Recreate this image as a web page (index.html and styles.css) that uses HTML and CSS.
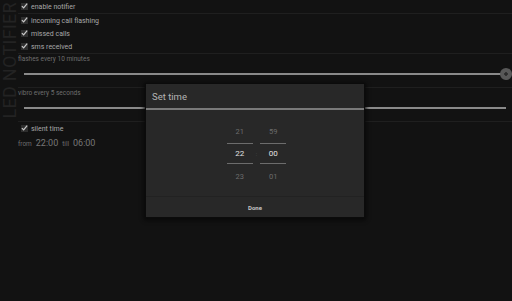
FILE: index.html
```html
<!DOCTYPE html>
<html>

<head>
    <meta charset="utf-8" />
    <title>LED Notifier</title>
    <link rel="stylesheet" href="styles.css">
</head>

<body>
    <div id="app">
        <div class="side">
            <span class="side-title">LED NOTIFIER</span>
        </div>
        <div class="prefs">
            <div class="row check-row">
                <span class="box"><svg viewBox="0 0 8 8"><path d="M1 4.2 L3 6.2 L7 1.2" /></svg></span>
                <span class="label">enable notifier</span>
            </div>
            <div class="group">
                <div class="row check-row">
                    <span class="box"><svg viewBox="0 0 8 8"><path d="M1 4.2 L3 6.2 L7 1.2" /></svg></span>
                    <span class="label">incoming call flashing</span>
                </div>
                <div class="row check-row">
                    <span class="box"><svg viewBox="0 0 8 8"><path d="M1 4.2 L3 6.2 L7 1.2" /></svg></span>
                    <span class="label">missed calls</span>
                </div>
                <div class="row check-row">
                    <span class="box"><svg viewBox="0 0 8 8"><path d="M1 4.2 L3 6.2 L7 1.2" /></svg></span>
                    <span class="label">sms received</span>
                </div>
            </div>
            <div class="slider-row">
                <span class="hint">flashes every 10 minutes</span>
                <div class="track">
                    <div class="line"></div>
                    <div class="thumb"></div>
                </div>
            </div>
            <div class="slider-row">
                <span class="hint">vibro every 5 seconds</span>
                <div class="track">
                    <div class="line"></div>
                </div>
            </div>
            <div class="silent">
                <div class="row check-row">
                    <span class="box"><svg viewBox="0 0 8 8"><path d="M1 4.2 L3 6.2 L7 1.2" /></svg></span>
                    <span class="label">silent time</span>
                </div>
                <div class="range">
                    <span class="small">from</span> <span class="big">22:00</span>
                    <span class="small">till</span> <span class="big">06:00</span>
                </div>
            </div>
        </div>

        <div class="dialog">
            <div class="dialog-title">Set time</div>
            <div class="picker">
                <div class="col">
                    <span class="num">21</span>
                    <span class="num current">22</span>
                    <span class="num">23</span>
                </div>
                <span class="colon">:</span>
                <div class="col">
                    <span class="num">59</span>
                    <span class="num current">00</span>
                    <span class="num">01</span>
                </div>
            </div>
            <div class="dialog-footer">Done</div>
        </div>
    </div>
</body>

</html>
```

FILE: styles.css
```css
body {
    padding: 0;
    margin: 0;
    background-color: #121212;
    font-family: Roboto, "Liberation Sans", sans-serif;
}

#app {
    position: relative;
    height: 301px;
    width: 512px;
    display: flex;
    overflow: hidden;
}

.side {
    width: 18px;
    display: flex;
    justify-content: center;
    align-items: flex-start;
    padding-top: 2px;
}

.side-title {
    writing-mode: vertical-rl;
    transform: rotate(180deg);
    white-space: nowrap;
    font-size: 18px;
    letter-spacing: 0.3px;
    color: #232323;
    line-height: 17px;
}

.prefs {
    flex: 1;
    display: flex;
    flex-direction: column;
}

.row {
    height: 13px;
    display: flex;
    align-items: center;
}

.check-row {
    padding-left: 3px;
    gap: 3px;
}

.group {
    border-top: 1px solid #1f1f1f;
    border-bottom: 1px solid #1f1f1f;
}

.box {
    width: 7px;
    height: 7px;
    background-color: #2e2e2e;
    display: flex;
}

.box svg {
    width: 8px;
    height: 8px;
    margin-top: -1px;
    fill: none;
    stroke: #c8c8c8;
    stroke-width: 1.4;
}

.label {
    font-size: 7px;
    color: #a8a8a8;
}

.slider-row {
    height: 33px;
    border-bottom: 1px solid #1f1f1f;
    display: flex;
    flex-direction: column;
}

.hint {
    font-size: 6.5px;
    color: #6e6e6e;
    margin-top: 1px;
}

.track {
    position: relative;
    margin: 8px 6px 0 6px;
    height: 6px;
    display: flex;
    align-items: center;
}

.line {
    flex: 1;
    height: 2px;
    background-color: #8a8a8a;
}

.thumb {
    position: absolute;
    right: -6px;
    top: -3px;
    width: 12px;
    height: 12px;
    border-radius: 50%;
    background: radial-gradient(circle, #2c2c2c 0 1.5px, #585858 2px);
}

.range {
    line-height: 11px;
    color: #6e6e6e;
}

.small {
    font-size: 6.5px;
}

.big {
    font-size: 9px;
    color: #777;
}

.dialog {
    position: absolute;
    left: 146px;
    top: 84px;
    width: 218px;
    height: 133px;
    background-color: #282828;
    box-shadow: 0 0 0 1px #0b0b0b, 0 1px 4px 2px #080808;
    display: flex;
    flex-direction: column;
}

.dialog-title {
    height: 24px;
    border-bottom: 2px solid #7a7a7a;
    font-size: 9.5px;
    color: #b4b4b4;
    padding-left: 6px;
    display: flex;
    align-items: center;
}

.picker {
    flex: 1;
    display: flex;
    justify-content: center;
    align-items: center;
    gap: 3px;
    padding-left: 3px;
    padding-top: 1px;
    border-bottom: 1px solid #222;
}

.col {
    width: 26px;
    display: flex;
    flex-direction: column;
    align-items: center;
}

.num {
    font-size: 7.5px;
    color: #6c6c6c;
    height: 24px;
    display: flex;
    align-items: center;
    justify-content: center;
    width: 100%;
}

.num.current {
    height: 19px;
    font-size: 8px;
    color: #e2e2e2;
    border-top: 1px solid #6c6c6c;
    border-bottom: 1px solid #6c6c6c;
}

.colon {
    font-size: 6px;
    color: #555;
}

.dialog-footer {
    height: 20px;
    display: flex;
    align-items: center;
    justify-content: center;
    font-size: 6px;
    font-weight: bold;
    color: #c4c4c4;
}
```
